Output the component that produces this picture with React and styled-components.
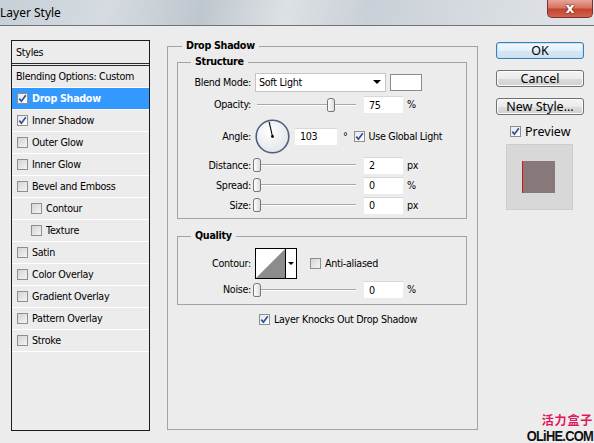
import React from 'react';
import styled, { createGlobalStyle } from 'styled-components';

const UI = `'DejaVu Sans', Verdana, sans-serif`;
const SEGOE = `'Noto Sans', 'Open Sans', sans-serif`;

const GlobalStyle = createGlobalStyle`
  html, body { margin: 0; padding: 0; background: #ececec; }
  body { font-family: ${UI}; font-size: 9.6px; letter-spacing: -0.3px; color: #000; }
  * { box-sizing: border-box; }
`;

const Window = styled.div`
  width: 594px;
  height: 443px;
  overflow: hidden;
  background: #ececec;
  display: flex;
  flex-direction: column;
`;

const TitleBar = styled.div`
  height: 26px;
  flex: none;
  display: flex;
  justify-content: space-between;
  align-items: flex-start;
  border-bottom: 1px solid #6e7378;
  background: linear-gradient(100deg, #c7cfd7 0%, #d5dbe1 18%, #bfc7ce 34%, #dde1e5 48%, #c9d0d7 62%, #d7dce1 82%, #e1e4e7 100%);
`;

const Title = styled.div`
  font-family: ${SEGOE};
  font-size: 12px;
  letter-spacing: 0;
  padding: 4px 0 0 0;
  color: #000;
`;

const CloseButton = styled.div`
  width: 46px;
  height: 18px;
  margin-right: 1px;
  border: 1px solid #7a3030;
  border-top: none;
  border-radius: 0 0 5px 5px;
  background: linear-gradient(#e8a496 0%, #d77463 45%, #c4442f 55%, #d26350 100%);
  display: flex;
  align-items: center;
  justify-content: center;
  padding-bottom: 1px;
  color: #fff;
  font: bold 14px ${UI};
  letter-spacing: 0;
  text-shadow: 0 0 2px #5a1a10, 0 0 1px #5a1a10;
`;

const Body = styled.div`
  flex: 1;
  display: flex;
  padding: 14px 0 0 11px;
`;

/* ---------- styles list ---------- */

const StyleList = styled.div`
  width: 139px;
  height: 391px;
  flex: none;
  border: 1px solid #1c1c1c;
  background: #ececec;
`;

const ListHeader = styled.div`
  height: 25px;
  border-bottom: 3px double #2a2a2a;
  padding-left: 4px;
  display: flex;
  align-items: center;
`;

const ListItem = styled.div`
  height: 22px;
  border-bottom: 1px solid #fff;
  display: flex;
  align-items: center;
  gap: 4px;
  padding-left: ${p => (p.$indent ? 19 : p.$plain ? 4 : 5)}px;
  background: ${p => (p.$active ? '#3399ff' : 'transparent')};
  color: ${p => (p.$active ? '#fff' : '#000')};
  font-weight: ${p => (p.$active ? 'bold' : 'normal')};
`;

/* ---------- checkbox ---------- */

const Box = styled.span`
  width: 11px;
  height: 11px;
  flex: none;
  border: 1px solid #8f8f8f;
  background: ${p => (p.$checked ? 'linear-gradient(135deg, #e8e8e8, #fff)' : 'linear-gradient(135deg, #d4d4d4, #f4f4f4)')};
  display: inline-flex;
  align-items: center;
  justify-content: center;
`;

const Checkbox = ({ checked }) => (
  <Box $checked={checked}>
    {checked && (
      <svg width="9" height="9" viewBox="0 0 9 9">
        <path d="M1.3 4.6 L3.4 7.2 L7.8 1.2" stroke="#2c4f9e" strokeWidth="1.7" fill="none" />
      </svg>
    )}
  </Box>
);

/* ---------- groups ---------- */

const Group = styled.fieldset`
  margin: ${p => p.$margin || '0'};
  padding: ${p => p.$pad || '0'};
  border: 1px solid #a3a3a3;
  min-width: 0;
  width: ${p => p.$w}px;
  height: ${p => (p.$h ? `${p.$h}px` : 'auto')};
  flex: none;
`;

const Caption = styled.legend`
  margin-left: ${p => p.$offset || 13}px;
  padding: 0 4px;
  font-weight: bold;
  line-height: 12px;
`;

const Middle = styled.div`
  margin-left: 17px;
  display: flex;
`;

const Row = styled.div`
  height: ${p => p.$h || 20}px;
  display: flex;
  align-items: center;
`;

const KnockRow = styled(Row)`
  margin-top: 7px;
  padding-left: 91px;
`;

const Label = styled.div`
  width: 73px;
  margin-right: 4px;
  text-align: right;
  flex: none;
`;

const Select = styled.div`
  width: 131px;
  height: 19px;
  background: #fff;
  border: 1px solid #c4c4c4;
  display: flex;
  align-items: center;
  justify-content: space-between;
  padding: 0 4px 0 3px;
`;

const Arrow = styled.span`
  width: 0;
  height: 0;
  border-left: 4px solid transparent;
  border-right: 4px solid transparent;
  border-top: 4px solid #000;
`;

const Swatch = styled.div`
  width: 32px;
  height: 17px;
  margin-left: 4px;
  background: #fff;
  border: 1px solid #8c8c8c;
`;

const Slider = styled.div`
  width: 105px;
  height: 16px;
  position: relative;
  flex: none;
  display: flex;
  align-items: center;
`;

const Track = styled.div`
  margin: 0 4px 0 2px;
  flex: 1;
  height: 2px;
  background: #a8a8a8;
  border-bottom: 1px solid #fff;
`;

const Thumb = styled.div`
  position: absolute;
  top: 1px;
  width: 8px;
  height: 14px;
  border: 1px solid #777;
  border-radius: 3px 3px 2px 2px;
  background: linear-gradient(90deg, #fff, #dcdcdc);
`;

const Field = styled.div`
  width: ${p => p.$w || 39}px;
  height: 17px;
  margin-left: ${p => p.$ml || 4}px;
  background: #fff;
  border-top: 1px solid #d8d8d8;
  padding-left: 5px;
  display: flex;
  align-items: center;
  flex: none;
`;

const Unit = styled.span`
  margin-left: ${p => p.$ml || 4}px;
`;

const CheckLabel = styled.label`
  display: flex;
  align-items: center;
  gap: 4px;
  margin-left: ${p => p.$ml || 0}px;
`;

const ContourBox = styled.div`
  width: 42px;
  height: 31px;
  border: 1px solid #000;
  background: #fff;
  display: flex;
  flex: none;
`;

const ContourArrow = styled.div`
  width: 11px;
  border-left: 1px solid #000;
  display: flex;
  align-items: center;
  justify-content: center;
`;

const SmallArrow = styled(Arrow)`
  border-left-width: 3px;
  border-right-width: 3px;
  border-top-width: 3px;
`;

/* ---------- right column ---------- */

const Side = styled.div`
  margin-left: 18px;
  padding-top: 2px;
  flex: 1;
  display: flex;
  flex-direction: column;
`;

const Button = styled.div`
  width: 88px;
  height: 17px;
  margin-bottom: 11px;
  border: 1px solid ${p => (p.$primary ? '#3c7fb1' : '#707070')};
  border-radius: 3px;
  background: ${p =>
    p.$primary
      ? 'linear-gradient(#f2f8fc 0%, #e4f0f8 50%, #d4e6f3 51%, #cfe2f0 100%)'
      : 'linear-gradient(#f3f3f3 0%, #ebebeb 50%, #dddddd 51%, #d0d0d0 100%)'};
  box-shadow: ${p => (p.$primary ? 'inset 0 0 0 1px #bfe4f9' : 'inset 0 0 0 1px #fcfcfc')};
  font-family: ${SEGOE};
  font-size: 12.5px;
  letter-spacing: 0;
  display: flex;
  align-items: center;
  justify-content: center;
`;

const PreviewToggle = styled(CheckLabel)`
  margin: -2px 0 6px 14px;
  height: 14px;
  font-family: ${SEGOE};
  font-size: 12.5px;
  letter-spacing: 0;
`;

const PreviewBox = styled.div`
  width: 67px;
  height: 66px;
  margin-left: 10px;
  background: #d8d8d8;
  border: 1px solid #cdcdcd;
  display: flex;
  align-items: center;
  justify-content: center;
`;

const PreviewSquare = styled.div`
  width: 33px;
  height: 32px;
  margin-left: -2px;
  background: #877979;
  border-left: 1px solid #d41616;
`;

const Watermark = styled.div`
  margin-top: auto;
  padding-right: 1px;
  text-align: right;
  line-height: 13px;
  margin-bottom: -1px;
`;

const Brand = styled.div`
  color: #e0185a;
  font: bold 12px 'Noto Sans CJK SC', sans-serif;
  letter-spacing: 0.8px;
  line-height: 12px;
  margin-bottom: 2px;
`;

const Domain = styled.div`
  color: #111;
  font: bold 14px 'Liberation Sans', Arial, sans-serif;
  letter-spacing: -0.8px;
  transform: scaleX(0.92);
  transform-origin: right;
`;

const listItems = [
  { name: 'Drop Shadow', checked: true, active: true },
  { name: 'Inner Shadow', checked: true },
  { name: 'Outer Glow' },
  { name: 'Inner Glow' },
  { name: 'Bevel and Emboss' },
  { name: 'Contour', indent: true },
  { name: 'Texture', indent: true },
  { name: 'Satin' },
  { name: 'Color Overlay' },
  { name: 'Gradient Overlay' },
  { name: 'Pattern Overlay' },
  { name: 'Stroke' },
];

const SliderRow = ({ label, pct, value, unit, h }) => (
  <Row $h={h}>
    <Label>{label}</Label>
    <Slider>
      <Track />
      <Thumb style={{ left: 2 + pct * 99 - 4 }} />
    </Slider>
    <Field>{value}</Field>
    <Unit>{unit}</Unit>
  </Row>
);

const AngleDial = ({ angle }) => {
  const r = (angle * Math.PI) / 180;
  const x = 17.5 + Math.cos(r) * 15;
  const y = 17.5 - Math.sin(r) * 15;
  return (
    <svg width="35" height="35" viewBox="0 0 35 35">
      <defs>
        <radialGradient id="dial" cx="40%" cy="35%" r="70%">
          <stop offset="0" stopColor="#ffffff" />
          <stop offset="1" stopColor="#e2e4e8" />
        </radialGradient>
      </defs>
      <circle cx="17.5" cy="17.5" r="16.3" fill="url(#dial)" stroke="#4d5f7c" strokeWidth="1.6" />
      <line x1="17.5" y1="17.5" x2={x} y2={y} stroke="#000" strokeWidth="1.1" />
      <circle cx="17.5" cy="17.5" r="1.4" fill="#000" />
    </svg>
  );
};

export default function App() {
  return (
    <Window>
      <GlobalStyle />
      <TitleBar>
        <Title>Layer Style</Title>
        <CloseButton>x</CloseButton>
      </TitleBar>
      <Body>
        <StyleList>
          <ListHeader>Styles</ListHeader>
          <ListItem $plain>Blending Options: Custom</ListItem>
          {listItems.map(item => (
            <ListItem key={item.name} $active={item.active} $indent={item.indent}>
              <Checkbox checked={item.checked} />
              {item.name}
            </ListItem>
          ))}
        </StyleList>

        <Middle>
          <Group $w={311} $h={390}>
            <Caption $offset={14}>Drop Shadow</Caption>
            <Group $w={290} $margin="4px 0 0 9px" $pad="4px 0 3px 0">
              <Caption>Structure</Caption>
              <Row $h={20}>
                <Label>Blend Mode:</Label>
                <Select>
                  Soft Light
                  <Arrow />
                </Select>
                <Swatch />
              </Row>
              <SliderRow label="Opacity:" pct={0.75} value="75" unit="%" h={25} />
              <Row $h={38}>
                <Label>Angle:</Label>
                <AngleDial angle={103} />
                <Field $w={42} $ml={5}>103</Field>
                <Unit $ml={6}>°</Unit>
                <CheckLabel $ml={6}>
                  <Checkbox checked />
                  Use Global Light
                </CheckLabel>
              </Row>
              <SliderRow label="Distance:" pct={0} value="2" unit="px" />
              <SliderRow label="Spread:" pct={0} value="0" unit="%" />
              <SliderRow label="Size:" pct={0} value="0" unit="px" />
            </Group>

            <Group $w={290} $margin="11px 0 0 9px" $pad="5px 0 4px 0">
              <Caption>Quality</Caption>
              <Row $h={32}>
                <Label>Contour:</Label>
                <ContourBox>
                  <svg width="29" height="29" viewBox="0 0 29 29">
                    <polygon points="0,29 29,0 29,29" fill="#8c8c8c" />
                  </svg>
                  <ContourArrow>
                    <SmallArrow />
                  </ContourArrow>
                </ContourBox>
                <CheckLabel $ml={13}>
                  <Checkbox />
                  Anti-aliased
                </CheckLabel>
              </Row>
              <SliderRow label="Noise:" pct={0} value="0" unit="%" h={21} />
            </Group>

            <KnockRow $h={14}>
              <CheckLabel>
                <Checkbox checked />
                Layer Knocks Out Drop Shadow
              </CheckLabel>
            </KnockRow>
          </Group>
        </Middle>

        <Side>
          <Button $primary>OK</Button>
          <Button>Cancel</Button>
          <Button>New Style...</Button>
          <PreviewToggle>
            <Checkbox checked />
            Preview
          </PreviewToggle>
          <PreviewBox>
            <PreviewSquare />
          </PreviewBox>
          <Watermark>
            <Brand>活力盒子</Brand>
            <Domain>OLiHE.COM</Domain>
          </Watermark>
        </Side>
      </Body>
    </Window>
  );
}
